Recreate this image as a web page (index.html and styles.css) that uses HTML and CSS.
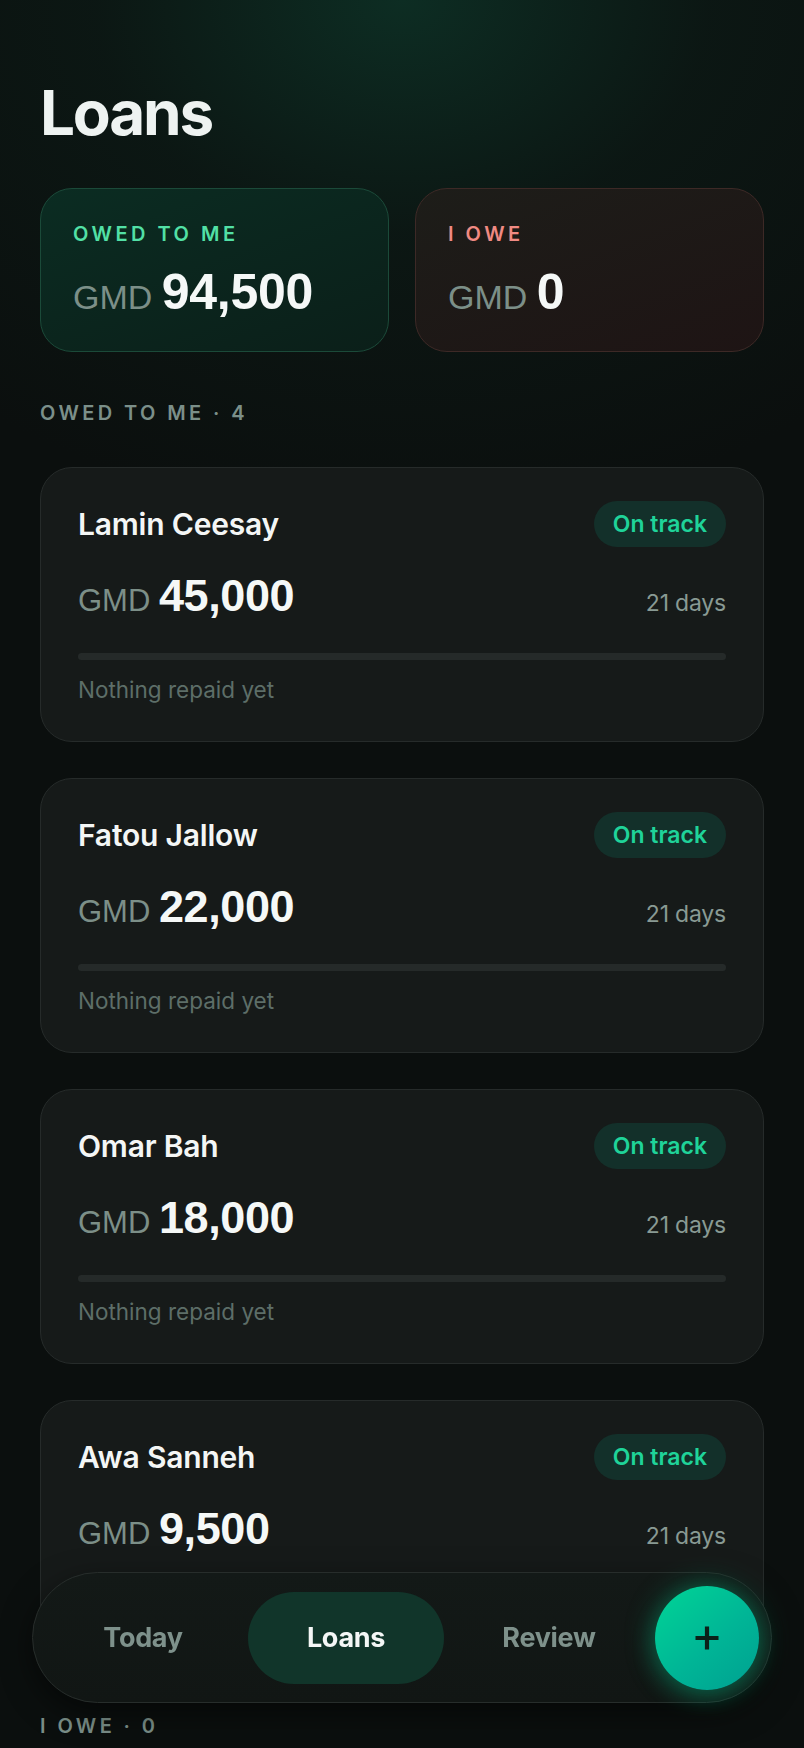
FILE: index.html
```html
<!DOCTYPE html>
<html lang="en">
<head>
<meta charset="utf-8">
<title>Loans</title>
<link rel="stylesheet" href="styles.css">
</head>
<body>
<main class="page">
  <h1 class="title">Loans</h1>

  <section class="summary">
    <div class="sum-card sum-owed">
      <div class="sum-label">OWED TO ME</div>
      <div class="sum-amount"><span class="cur">GMD</span> <span class="val">94,500</span></div>
    </div>
    <div class="sum-card sum-owe">
      <div class="sum-label">I OWE</div>
      <div class="sum-amount"><span class="cur">GMD</span> <span class="val">0</span></div>
    </div>
  </section>

  <h2 class="section-label first">OWED TO ME · 4</h2>

  <div class="loan-list">
    <article class="loan">
      <div class="loan-top">
        <div class="loan-name">Lamin Ceesay</div>
        <div class="badge">On track</div>
      </div>
      <div class="loan-mid">
        <div class="loan-amount"><span class="cur">GMD</span> <span class="val">45,000</span></div>
        <div class="loan-days">21 days</div>
      </div>
      <div class="bar"><div class="bar-fill" style="width:0%"></div></div>
      <div class="loan-note">Nothing repaid yet</div>
    </article>

    <article class="loan">
      <div class="loan-top">
        <div class="loan-name">Fatou Jallow</div>
        <div class="badge">On track</div>
      </div>
      <div class="loan-mid">
        <div class="loan-amount"><span class="cur">GMD</span> <span class="val">22,000</span></div>
        <div class="loan-days">21 days</div>
      </div>
      <div class="bar"><div class="bar-fill" style="width:0%"></div></div>
      <div class="loan-note">Nothing repaid yet</div>
    </article>

    <article class="loan">
      <div class="loan-top">
        <div class="loan-name">Omar Bah</div>
        <div class="badge">On track</div>
      </div>
      <div class="loan-mid">
        <div class="loan-amount"><span class="cur">GMD</span> <span class="val">18,000</span></div>
        <div class="loan-days">21 days</div>
      </div>
      <div class="bar"><div class="bar-fill" style="width:0%"></div></div>
      <div class="loan-note">Nothing repaid yet</div>
    </article>

    <article class="loan">
      <div class="loan-top">
        <div class="loan-name">Awa Sanneh</div>
        <div class="badge">On track</div>
      </div>
      <div class="loan-mid">
        <div class="loan-amount"><span class="cur">GMD</span> <span class="val">9,500</span></div>
        <div class="loan-days">21 days</div>
      </div>
      <div class="bar"><div class="bar-fill" style="width:0%"></div></div>
      <div class="loan-note">Nothing repaid yet</div>
    </article>
  </div>

  <h2 class="section-label second">I OWE · 0</h2>
  <div class="empty-space"></div>
</main>

<nav class="tabbar">
  <a class="tab">Today</a>
  <a class="tab active">Loans</a>
  <a class="tab">Review</a>
  <button class="fab" aria-label="Add loan">
    <svg width="26" height="26" viewBox="0 0 26 26" aria-hidden="true">
      <path d="M13 1.5v23M1.5 13h23" stroke="#0b2119" stroke-width="4.2" fill="none"/>
    </svg>
  </button>
</nav>
</body>
</html>
```

FILE: styles.css
```css
* { box-sizing: border-box; }

html, body {
  margin: 0;
  padding: 0;
}

body {
  background-color: #0b0f0e;
  background-image: radial-gradient(ellipse 85% 520px at 50% 0%, #0d2d23 0%, rgba(12, 28, 23, 0.6) 45%, rgba(11, 15, 14, 0) 100%);
  background-repeat: no-repeat;
  color: #f2f5f4;
  font-family: "Inter", "Noto Sans", sans-serif;
  min-height: 1748px;
}

.page {
  padding: 0 40px 120px;
}

.title {
  margin: 0;
  padding-top: 82px;
  font-family: "Inter", sans-serif;
  font-weight: 700;
  font-size: 62px;
  line-height: 1;
  letter-spacing: -2.2px;
  color: #eef3f1;
}

.summary {
  display: grid;
  grid-template-columns: 1fr 1fr;
  gap: 26px;
  margin-top: 44px;
}

.sum-card {
  border-radius: 32px;
  border: 1px solid;
  padding: 33px 32px 36px;
}

.sum-owed {
  background: linear-gradient(160deg, #0b2c22 0%, #0b1f19 100%);
  border-color: #1b4a39;
}

.sum-owe {
  background: linear-gradient(160deg, #1d1d19 0%, #1e1414 100%);
  border-color: #3d2926;
}

.sum-label {
  font-family: "Inter", sans-serif;
  font-weight: 600;
  font-size: 20px;
  line-height: 24px;
  letter-spacing: 3.5px;
  margin-bottom: 21px;
}

.sum-owed .sum-label { color: #52e0a6; }
.sum-owe .sum-label { color: #f08a83; }

.sum-amount {
  font-family: "Liberation Sans", Arial, sans-serif;
  font-size: 34px;
  line-height: 48px;
  height: 48px;
  white-space: nowrap;
}

.sum-amount .cur {
  color: #7c8f88;
  font-size: 34px;
  line-height: 1;
}

.sum-amount .val {
  color: #f5f8f7;
  font-weight: 700;
  font-size: 50px;
  line-height: 1;
  letter-spacing: -0.3px;
}

.section-label {
  margin: 0;
  font-family: "Inter", sans-serif;
  font-weight: 600;
  font-size: 20px;
  line-height: 24px;
  letter-spacing: 3.4px;
  color: #7b8f89;
}

.section-label.first { margin-top: 49px; }
.section-label.second { margin-top: 39px; }

.loan-list {
  display: flex;
  flex-direction: column;
  gap: 36px;
  margin-top: 42px;
}

.loan {
  background: #161a19;
  border: 1px solid #262b2a;
  border-radius: 32px;
  padding: 33px 37px 39px;
}

.loan-top {
  display: flex;
  justify-content: space-between;
  align-items: center;
  height: 46px;
}

.loan-name {
  font-family: "Inter", sans-serif;
  font-weight: 600;
  font-size: 30px;
  letter-spacing: -0.2px;
  color: #f4f6f5;
}

.badge {
  height: 46px;
  padding: 0 19px;
  border-radius: 23px;
  background: #13302a;
  color: #1fd399;
  font-family: "Inter", sans-serif;
  font-weight: 600;
  font-size: 23px;
  letter-spacing: 0;
  display: flex;
  align-items: center;
}

.loan-mid {
  display: flex;
  justify-content: space-between;
  align-items: baseline;
  margin-top: 26px;
  height: 44px;
}

.loan-amount {
  font-family: "Liberation Sans", Arial, sans-serif;
  font-size: 31px;
  line-height: 44px;
  white-space: nowrap;
}

.loan-amount .cur {
  color: #7c8f88;
  font-size: 31px;
  line-height: 1;
}

.loan-amount .val {
  color: #f5f8f7;
  font-weight: 700;
  font-size: 45px;
  line-height: 1;
  letter-spacing: -0.4px;
}

.loan-days {
  font-family: "Inter", sans-serif;
  font-size: 23px;
  letter-spacing: -0.2px;
  color: #899a94;
}

.bar {
  margin-top: 36px;
  height: 7px;
  border-radius: 4px;
  background: #252a29;
  overflow: hidden;
}

.bar-fill {
  height: 100%;
  background: #1fd399;
}

.loan-note {
  margin-top: 18px;
  font-family: "Inter", sans-serif;
  font-size: 22.5px;
  line-height: 24px;
  letter-spacing: 0;
  color: #5d6e68;
}

.empty-space {
  height: 80px;
}

/* bottom tab bar (overlay) */
.tabbar {
  position: fixed;
  left: 32px;
  right: 32px;
  bottom: 45px;
  height: 131px;
  border-radius: 66px;
  background: linear-gradient(180deg, #131917 0%, #111614 100%);
  border: 1px solid #272d2b;
  display: flex;
  align-items: center;
  gap: 7px;
  padding: 0 12px;
  box-shadow: 0 10px 30px rgba(0, 0, 0, 0.5);
}

.tab {
  flex: 1;
  height: 92px;
  border-radius: 46px;
  display: flex;
  align-items: center;
  justify-content: center;
  font-family: "Inter", sans-serif;
  font-weight: 700;
  font-size: 27px;
  letter-spacing: -0.3px;
  color: #7e918b;
  text-decoration: none;
}

.tab.active {
  background: #11352a;
  color: #f4f7f6;
}

.fab {
  flex: 0 0 104px;
  width: 104px;
  height: 104px;
  margin-left: 1px;
  border: none;
  border-radius: 50%;
  background: linear-gradient(140deg, #00d596 0%, #00b596 55%, #00a091 100%);
  box-shadow: 0 0 30px rgba(0, 200, 140, 0.4), 0 8px 24px rgba(0, 180, 130, 0.22);
  display: flex;
  align-items: center;
  justify-content: center;
  padding: 0;
  cursor: pointer;
}

.fab svg { display: block; }
```
